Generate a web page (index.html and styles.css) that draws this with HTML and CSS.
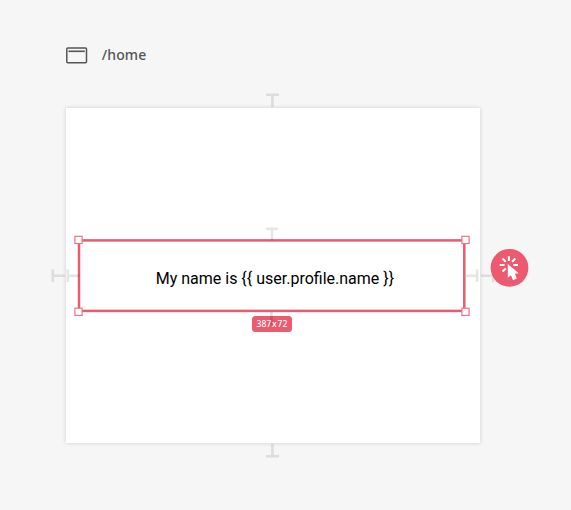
FILE: index.html
```html
<!DOCTYPE html>
<html lang="en">
<head>
<meta charset="utf-8">
<title>Page editor</title>
<link rel="stylesheet" href="styles.css">
</head>
<body>
<main class="editor">
  <header class="page-header">
    <svg class="page-icon" width="22" height="17" viewBox="0 0 22 17" fill="none" stroke="#555" stroke-width="1.5">
      <rect x=".8" y="1" width="19.7" height="14.8" rx="1"/>
      <path d="M2.5 4.3H18.8" stroke-width="1.6"/>
    </svg>
    <span class="page-path">/home</span>
  </header>
  <section class="frame">
    <div class="selection">
      <span class="content">My name is {{ user.profile.name }}</span>
    </div>
  </section>
  <svg class="guides" width="571" height="510" viewBox="0 0 571 510" fill="none">
    <rect x="79" y="240.4" width="385.3" height="70.5" stroke="#eb5a6e" stroke-width="2.5"/>
    <g stroke="#000" stroke-width="2.6" stroke-opacity=".1">
      <path d="M266 94.7H279M272.4 96V107"/>
      <path d="M266 228.7H278M272 230V240.5"/>
      <path d="M266 456.3H279M272.4 444V455"/>
      <path d="M52.8 269.5V282M54.1 275.7H65"/>
      <path d="M67.8 269.5V282M69 275.7H79.5"/>
      <path d="M477.2 269.5V282M466 275.7H476"/>
      <path d="M493.2 269.5V282M481 275.7H492"/>
    </g>
    <g fill="#fff" stroke="#ed7386" stroke-width="1.2">
      <rect x="74.9" y="236.3" width="7.2" height="7.2"/>
      <rect x="461.9" y="236.3" width="7.2" height="7.2"/>
      <rect x="74.9" y="308.2" width="7.2" height="7.2"/>
      <rect x="461.9" y="308.2" width="7.2" height="7.2"/>
    </g>
  </svg>
  <span class="size-label">387<span class="times">x</span>72</span>
  <svg class="size-guide" width="3" height="13"><path d="M1.5 0V13" stroke="#000" stroke-opacity=".13" stroke-width="2.6"/></svg>
  <button class="action" aria-label="Add interaction">
    <svg width="38" height="38" viewBox="0 0 38 38">
      <circle cx="18.5" cy="18.8" r="18.9" fill="#eb5a6e"/>
      <path d="M17.9 7.2V12M11.5 9.6L14.7 12.8M24.3 9.6L21.1 12.8M8.7 16H13.5M22.3 16H27M14.7 19.4L11.5 22.6" fill="none" stroke="#fff" stroke-width="2.1"/>
      <path d="M16.8 15V28.8L20 26.2L22 31.2L25.9 29.6L23.9 24.7L27.8 24.3Z" fill="#fff"/>
    </svg>
  </button>
</main>
</body>
</html>
```
FILE: styles.css
```css
* { box-sizing: border-box; }
body { margin: 0; background: #f6f6f6; }
.editor { position: relative; width: 571px; height: 510px; padding: 45px 91px 0 65.6px; overflow: hidden; }
.page-header { display: flex; align-items: center; gap: 14.2px; height: 20px; margin-bottom: 42.5px; }
.page-icon { display: block; }
.page-path { font: 500 14px/20px "Noto Sans", sans-serif; letter-spacing: .1px; color: #555; }
.frame { display: flex; align-items: center; justify-content: center; width: 414px; height: 335px; background: #fff; box-shadow: 0 0 4px rgba(0,0,0,.17); }
.selection { display: flex; align-items: center; justify-content: center; width: 388px; height: 73px; }
.content { padding: 7px 0 0 4.6px; font: 400 16px/20px Roboto, sans-serif; color: #000; white-space: nowrap; }
.guides { position: absolute; left: 0; top: 0; overflow: visible; pointer-events: none; }
.size-label { position: absolute; left: 252px; top: 316px; width: 40px; height: 16px; border-radius: 3.5px; background: #eb5a6e; color: #fff; font: 500 8.5px/16px "Noto Sans", sans-serif; letter-spacing: .1px; text-align: center; }
.times { margin: 0 .7px; }
.size-guide { position: absolute; left: 270px; top: 312px; }
.action { position: absolute; left: 491px; top: 249px; width: 38px; height: 38px; padding: 0; border: 0; border-radius: 50%; background: none; }
.action svg { display: block; overflow: visible; }
```
